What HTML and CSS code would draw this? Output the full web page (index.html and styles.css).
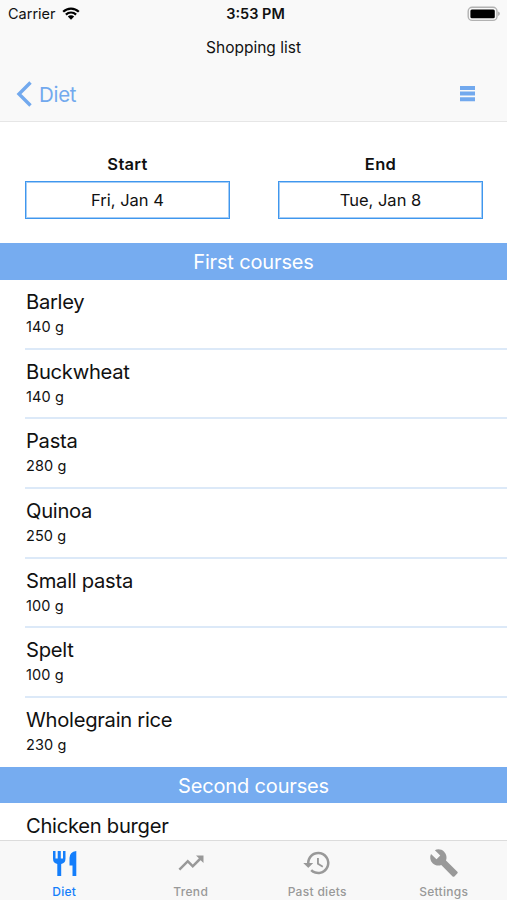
FILE: index.html
```html
<!DOCTYPE html>
<html lang="en">
<head>
<meta charset="utf-8">
<title>Shopping list</title>
<link rel="stylesheet" href="styles.css">
</head>
<body>
<div class="app">
  <header class="header">
    <div class="status">
      <div class="carrier"><span>Carrier</span>
        <svg class="wifi" viewBox="0 0 18 13"><path d="M1.2 4.8a11 11 0 0 1 15.6 0M3.9 7.6a7.2 7.2 0 0 1 10.2 0" fill="none" stroke="#000" stroke-width="2.2"/><path d="M5.8 9.6a4.5 4.5 0 0 1 6.4 0L9 12.7z"/></svg>
      </div>
      <div class="time">3:53 PM</div>
      <svg class="battery" viewBox="0 0 34 16"><rect x="1.2" y="1.2" width="28.8" height="13.2" rx="4" fill="none" stroke="#b2b2b2" stroke-width="1.4"/><rect x="3.4" y="3.4" width="24.4" height="8.8" rx="1.5"/><path d="M31.2 5.5q1.6.6 1.6 2.2t-1.6 2.2z" fill="#a5a5a5"/></svg>
    </div>
    <h1 class="title">Shopping list</h1>
    <div class="nav">
      <a class="back"><svg class="chevron" viewBox="0 0 16 26"><path d="M14.5 1.5 3 13 14.5 24.5" fill="none" stroke="#72a9ee" stroke-width="3.4"/></svg><span>Diet</span></a>
      <svg class="menu" viewBox="0 0 15 16"><path d="M0 0h15v4H0zM0 5.6h15v4H0zM0 11.2h15v4H0z" fill="#72a9ee"/></svg>
    </div>
  </header>
  <main class="content">
    <section class="dates">
      <div class="date"><h2>Start</h2><div class="field">Fri, Jan 4</div></div>
      <div class="date"><h2>End</h2><div class="field">Tue, Jan 8</div></div>
    </section>
    <h2 class="band">First courses</h2>
    <ul class="list">
      <li><strong>Barley</strong><span>140 g</span></li>
      <li><strong>Buckwheat</strong><span>140 g</span></li>
      <li><strong>Pasta</strong><span>280 g</span></li>
      <li><strong>Quinoa</strong><span>250 g</span></li>
      <li><strong>Small pasta</strong><span>100 g</span></li>
      <li><strong>Spelt</strong><span>100 g</span></li>
      <li><strong>Wholegrain rice</strong><span>230 g</span></li>
    </ul>
    <h2 class="band">Second courses</h2>
    <ul class="list">
      <li><strong>Chicken burger</strong></li>
    </ul>
  </main>
  <nav class="tabs">
    <a class="tab active"><svg viewBox="0 0 32 32"><path d="M5 3v7.500q0 4.600 4.300 5.400V28h3.900V15.900q4.300-.8 4.300-5.400V3h-2.500v7.500h-2.200V3h-3.100v7.500H7.500V3zM28.300 3v25h-3.800V17.500h-3V10q0-6 6.800-7z"/></svg><span>Diet</span></a>
    <a class="tab"><svg class="icon-small" viewBox="0 0 24 24"><path d="m16 6 2.290 2.290-4.880 4.880-4-4L2 16.590 3.410 18l6-6 4 4 6.300-6.290L22 12V6z"/></svg><span>Trend</span></a>
    <a class="tab"><svg class="icon-small" viewBox="0 0 24 24"><path d="M13 3a9 9 0 0 0-9 9H1l3.890 3.890.07.14L9 12H6a7 7 0 1 1 2.060 4.940l-1.420 1.420A9 9 0 1 0 13 3zm-1 5v5l4.280 2.540.72-1.210-3.500-2.080V8z"/></svg><span>Past diets</span></a>
    <a class="tab"><svg class="icon-small" viewBox="0 0 24 24"><path d="m22.700 19-9.100-9.100c.9-2.300.4-5-1.500-6.900-2-2-5-2.400-7.400-1.300L9 6 6 9 1.600 4.700C.4 7.100.9 10.100 2.900 12.100c1.900 1.900 4.600 2.400 6.900 1.500l9.100 9.100c.4.4 1 .4 1.400 0l2.300-2.300c.5-.4.5-1.100.1-1.400z"/></svg><span>Settings</span></a>
  </nav>
</div>
</body>
</html>
```

FILE: styles.css
```css
* { box-sizing: border-box; }
body, h1, h2, ul { margin: 0; padding: 0; }
body { font-family: Inter, "Liberation Sans", sans-serif; color: #111; background: #fff; }
svg { display: block; }
.app { height: 900px; display: flex; flex-direction: column; overflow: hidden; }
.header { flex: 0 0 122px; background: #f9f9f9; border-bottom: 1px solid #e6e6e6; }
.status { height: 27px; display: grid; grid-template-columns: 1fr auto 1fr; align-items: center; padding: 0 6px 0 8px; }
.carrier { display: flex; align-items: center; gap: 6px; font-size: 14.5px; }
.wifi { width: 18px; height: 13px; }
.time { font-size: 14.5px; font-weight: 600; padding-left: 2px; }
.battery { width: 34px; height: 16px; justify-self: end; }
.title { height: 40px; line-height: 41px; text-align: center; font-size: 15.5px; font-weight: 400; }
.nav { height: 54px; display: flex; align-items: center; justify-content: space-between; padding: 0 32px 0 16px; }
.back { display: flex; align-items: center; gap: 7px; color: #72a9ee; font-size: 20.5px; letter-spacing: -0.3px; }
.chevron { width: 16px; height: 26px; }
.menu { width: 15px; height: 16px; }
.content { flex: 1; min-height: 0; overflow: hidden; }
.dates { height: 121px; display: grid; grid-template-columns: 1fr 1fr; gap: 48px; padding: 32px 24px 0 25px; }
.date { text-align: center; }
.date h2 { font-size: 16.5px; line-height: 20px; font-weight: 600; margin-bottom: 7px; letter-spacing: 0.3px; }
.field { height: 38px; line-height: 35px; border: 1.5px solid #3f97ee; border-width: 1px; box-shadow: inset 0 0 0 1px #a5cdf6; line-height: 37px; font-size: 16.5px; }
.band { height: 36.5px; line-height: 38px; background: #76acf0; color: #fff; text-align: center; font-size: 20px; font-weight: 400; letter-spacing: -0.15px; }
.list { list-style: none; padding: 0.7px 0 0 25px; }
.list li { height: 69.64px; padding: 7px 0 0 1px; background: linear-gradient(#dce9f8, #dce9f8) 0 100% / 100% 2px no-repeat; }
.list li:last-child { height: 68.94px; background: none; }
.list strong { display: block; font-size: 20.2px; line-height: 30px; font-weight: 400; letter-spacing: -0.28px; }
.list span { display: block; font-size: 14.5px; line-height: 20px; letter-spacing: 0.1px; }
.tabs { flex: 0 0 60px; display: grid; grid-template-columns: repeat(4, 1fr); background: #f8f8f8; border-top: 1px solid #dcdcdc; padding-left: 1px; }
.tab { display: flex; flex-direction: column; align-items: center; color: #999; font-size: 12px; font-weight: 500; line-height: 16px; letter-spacing: 0.3px; padding-top: 7px; }
.tab svg { width: 32px; height: 32px; fill: currentColor; margin-bottom: 4px; }
.tab .icon-small { width: 30px; height: 30px; margin: 0 0 6px; }
.active { color: #147efb; }
```
